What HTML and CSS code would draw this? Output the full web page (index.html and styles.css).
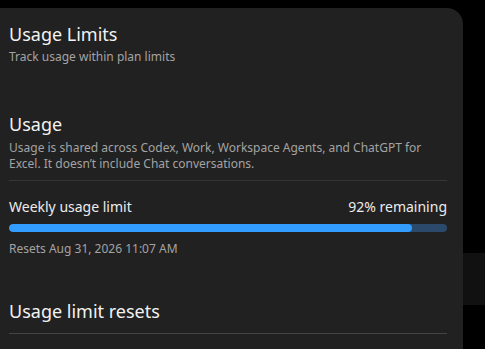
FILE: index.html
```html
<!DOCTYPE html>
<html>
<head>
<meta charset="utf-8">
<link rel="stylesheet" href="styles.css">
</head>
<body>
<div class="backdrop-window"></div>
<main class="panel">
  <header class="page-head">
    <h1 class="title">Usage Limits</h1>
    <p class="subtitle">Track usage within plan limits</p>
  </header>
  <section class="usage">
    <h2 class="title">Usage</h2>
    <p class="desc">Usage is shared across Codex, Work, Workspace Agents, and ChatGPT for Excel. It doesn’t include Chat conversations.</p>
    <div class="divider"></div>
    <div class="limit">
      <div class="limit-row">
        <span class="limit-label">Weekly usage limit</span>
        <span class="limit-value">92% remaining</span>
      </div>
      <div class="bar"><div class="bar-fill" style="width: 92%"></div></div>
      <div class="limit-reset">Resets Aug 31, 2026 11:07 AM</div>
    </div>
  </section>
  <section class="resets">
    <h2 class="title">Usage limit resets</h2>
    <div class="divider"></div>
  </section>
</main>
</body>
</html>
```
FILE: styles.css
```css
html, body {
  margin: 0;
  padding: 0;
  background: #000;
  height: 100%;
  overflow: hidden;
}
body {
  font-family: "Noto Sans", "Open Sans", sans-serif;
  color: #ececec;
  position: relative;
}
.backdrop-window {
  position: absolute;
  left: 463px;
  top: 253px;
  width: 22px;
  height: 52px;
  background: #111111;
}
.panel {
  position: relative;
  margin-top: 8px;
  width: 463px;
  height: 341px;
  box-sizing: border-box;
  background: #212121;
  border-top-right-radius: 16px;
  padding: 14px 16px 0 9px;
  overflow: hidden;
}
.title {
  margin: 0;
  font-size: 18px;
  font-weight: 400;
  line-height: 24px;
  color: #f2f2f2;
}
.subtitle {
  margin: 3px 0 0;
  font-size: 12px;
  line-height: 16px;
  color: #a3a3a3;
}
.usage {
  margin-top: 47px;
}
.desc {
  margin: 4px 0 0;
  font-size: 12px;
  line-height: 15.7px;
  color: #a3a3a3;
}
.divider {
  height: 1px;
  background: #353535;
}
.usage .divider {
  margin-top: 9px;
}
.limit {
  padding-top: 16px;
}
.limit-row {
  display: flex;
  justify-content: space-between;
  font-size: 14px;
  line-height: 20px;
  color: #ececec;
}
.bar {
  margin-top: 7px;
  height: 8px;
  border-radius: 4px;
  background: #2b4a6b;
  overflow: hidden;
}
.bar-fill {
  height: 100%;
  border-radius: 4px;
  background: #339cff;
}
.limit-reset {
  margin-top: 9px;
  font-size: 12px;
  line-height: 16px;
  color: #a3a3a3;
}
.resets {
  margin-top: 42px;
}
.resets .divider {
  margin-top: 10px;
  background: #444;
}
```
